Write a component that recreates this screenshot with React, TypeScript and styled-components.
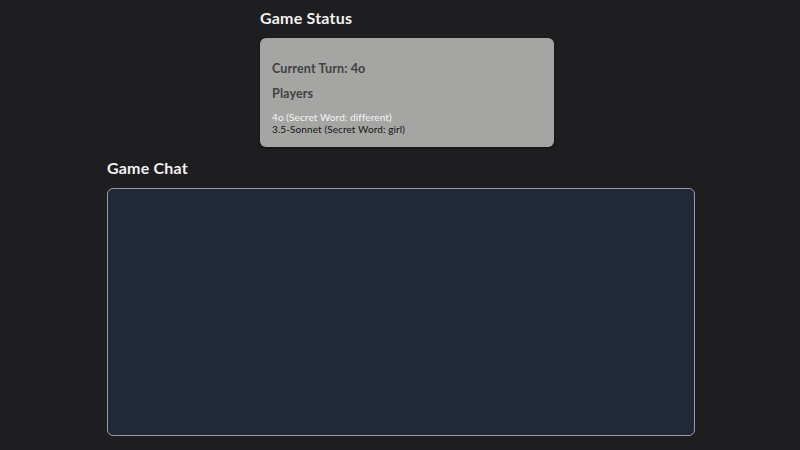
import styled, { createGlobalStyle } from "styled-components";

const Global = createGlobalStyle`
  html, body {
    margin: 0;
    background: #1e1e20;
    font-family: "Lato", "Noto Sans", sans-serif;
  }
`;

const players = [
  { name: "4o", word: "different", active: true },
  { name: "3.5-Sonnet", word: "girl", active: false },
];

export default function App() {
  return (
    <Page>
      <Global />
      <StatusSection>
        <Heading>Game Status</Heading>
        <StatusCard>
          <CardTitle>Current Turn: 4o</CardTitle>
          <CardTitle>Players</CardTitle>
          <PlayerList>
            {players.map((p) => (
              <PlayerRow key={p.name} $active={p.active}>
                {p.name} (Secret Word: {p.word})
              </PlayerRow>
            ))}
          </PlayerList>
        </StatusCard>
      </StatusSection>
      <ChatSection>
        <Heading>Game Chat</Heading>
        <ChatBox />
      </ChatSection>
    </Page>
  );
}

const Page = styled.div`
  width: 800px;
  height: 450px;
  box-sizing: border-box;
  padding-top: 9px;
  overflow: hidden;
`;

const StatusSection = styled.section`
  width: 294px;
  margin-left: 260px;
`;

const Heading = styled.h2`
  margin: 0 0 11px;
  font-size: 16px;
  line-height: 18px;
  font-weight: 700;
  color: #f2f2f2;
  letter-spacing: 0.2px;
`;

const StatusCard = styled.div`
  height: 109px;
  box-sizing: border-box;
  padding: 23px 12px 0;
  background: #a5a6a3;
  border-radius: 6px;
  box-shadow: 0 1px 3px rgba(0, 0, 0, 0.4);
`;

const CardTitle = styled.h3`
  margin: 0 0 10px;
  font-size: 12.6px;
  line-height: 15px;
  font-weight: 700;
  color: #404241;
  letter-spacing: 0.1px;
`;

const PlayerList = styled.div`
  margin-top: 9px;
  display: flex;
  flex-direction: column;
`;

const PlayerRow = styled.div<{ $active: boolean }>`
  font-size: 10px;
  line-height: 12px;
  color: ${(p) => (p.$active ? "#f4f4f4" : "#141414")};
  letter-spacing: 0.1px;
`;

const ChatSection = styled.section`
  width: 588px;
  margin: 12px 0 0 107px;
`;

const ChatBox = styled.div`
  height: 248px;
  box-sizing: border-box;
  background: #1f2937;
  border: 1px solid #959ca5;
  border-radius: 6px;
`;
